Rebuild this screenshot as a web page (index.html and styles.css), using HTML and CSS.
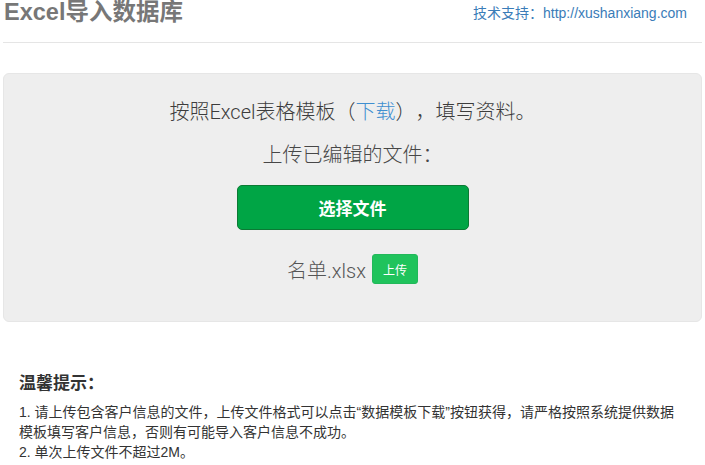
FILE: index.html
```html
<!DOCTYPE html>
<html lang="zh-CN">
<head>
<meta charset="utf-8">
<title>Excel导入数据库</title>
<link rel="stylesheet" href="styles.css">
</head>
<body>
<div class="page">
  <header class="header">
    <h1 class="title">Excel导入数据库</h1>
    <div class="support">技术支持：<a href="#" class="support-link">http://xushanxiang.com</a></div>
  </header>

  <section class="panel">
    <p class="panel-line">按照Excel表格模板（<a href="#" class="dl-link">下载</a>），填写资料。</p>
    <p class="panel-line panel-line-second">上传已编辑的文件：</p>
    <button class="choose-btn" type="button">选择文件</button>
    <div class="file-row">
      <span class="file-name">名单.xlsx</span>
      <button class="upload-btn" type="button">上传</button>
    </div>
  </section>

  <section class="tips">
    <h2 class="tips-title">温馨提示：</h2>
    <p class="tips-item">1. 请上传包含客户信息的文件，上传文件格式可以点击“数据模板下载”按钮获得，请严格按照系统提供数据模板填写客户信息，否则有可能导入客户信息不成功。</p>
    <p class="tips-item">2. 单次上传文件不超过2M。</p>
  </section>
</div>
</body>
</html>
```

FILE: styles.css
```css
* { box-sizing: border-box; }

html, body {
  margin: 0;
  padding: 0;
  background: #ffffff;
}

body {
  font-family: "Liberation Sans", "Noto Sans CJK SC", sans-serif;
  color: #333333;
  text-spacing-trim: space-all;
}

.page {
  padding: 0 3px;
}

.header {
  display: flex;
  justify-content: space-between;
  align-items: flex-start;
  height: 43px;
  border-bottom: 1px solid #e5e5e5;
}

.title {
  margin: 0;
  padding-left: 1px;
  font-size: 23.5px;
  line-height: 24px;
  font-weight: bold;
  color: #777777;
}

.support {
  margin-top: 3px;
  padding-right: 15px;
  font-size: 14px;
  line-height: 20px;
  color: #3a7cb8;
}

.support-link {
  color: #3a7cb8;
  text-decoration: none;
}

.panel {
  margin-top: 30px;
  height: 249px;
  background: #eeeeee;
  border: 1px solid #e6e6e6;
  border-radius: 6px;
  display: flex;
  flex-direction: column;
  align-items: center;
  padding-top: 23px;
  font-family: "Roboto", "Noto Sans CJK SC", sans-serif;
}

.panel-line {
  margin: 0;
  font-size: 20px;
  line-height: 30px;
  font-weight: 300;
  color: #3c3c3c;
}

.panel-line-second {
  margin-top: 13px;
  color: #474747;
}

.dl-link {
  color: #3f8fd0;
  text-decoration: none;
}

.choose-btn {
  margin-top: 15px;
  width: 232px;
  height: 45px;
  background: #00a545;
  border: 1px solid #0b7a34;
  border-radius: 5px;
  color: #ffffff;
  font-family: "Liberation Sans", "Noto Sans CJK SC", sans-serif;
  font-size: 17px;
  font-weight: bold;
}

.file-row {
  margin-top: 24px;
  display: flex;
  align-items: center;
  gap: 6px;
  height: 30px;
}

.file-name {
  font-size: 20px;
  font-weight: 300;
  color: #555555;
}

.upload-btn {
  width: 46px;
  height: 30px;
  background: #20c35c;
  border: 1px solid #22b85a;
  border-radius: 3px;
  color: #ffffff;
  font-family: "Liberation Sans", "Noto Sans CJK SC", sans-serif;
  font-size: 12px;
  padding: 0;
}

.tips {
  margin-top: 52px;
  padding: 0 16px;
}

.tips-title {
  margin: 0 0 8px 0;
  font-size: 17px;
  line-height: 20px;
  font-weight: bold;
  color: #333333;
}

.tips-item {
  margin: 0;
  font-size: 14px;
  line-height: 20px;
  color: #333333;
}
```
